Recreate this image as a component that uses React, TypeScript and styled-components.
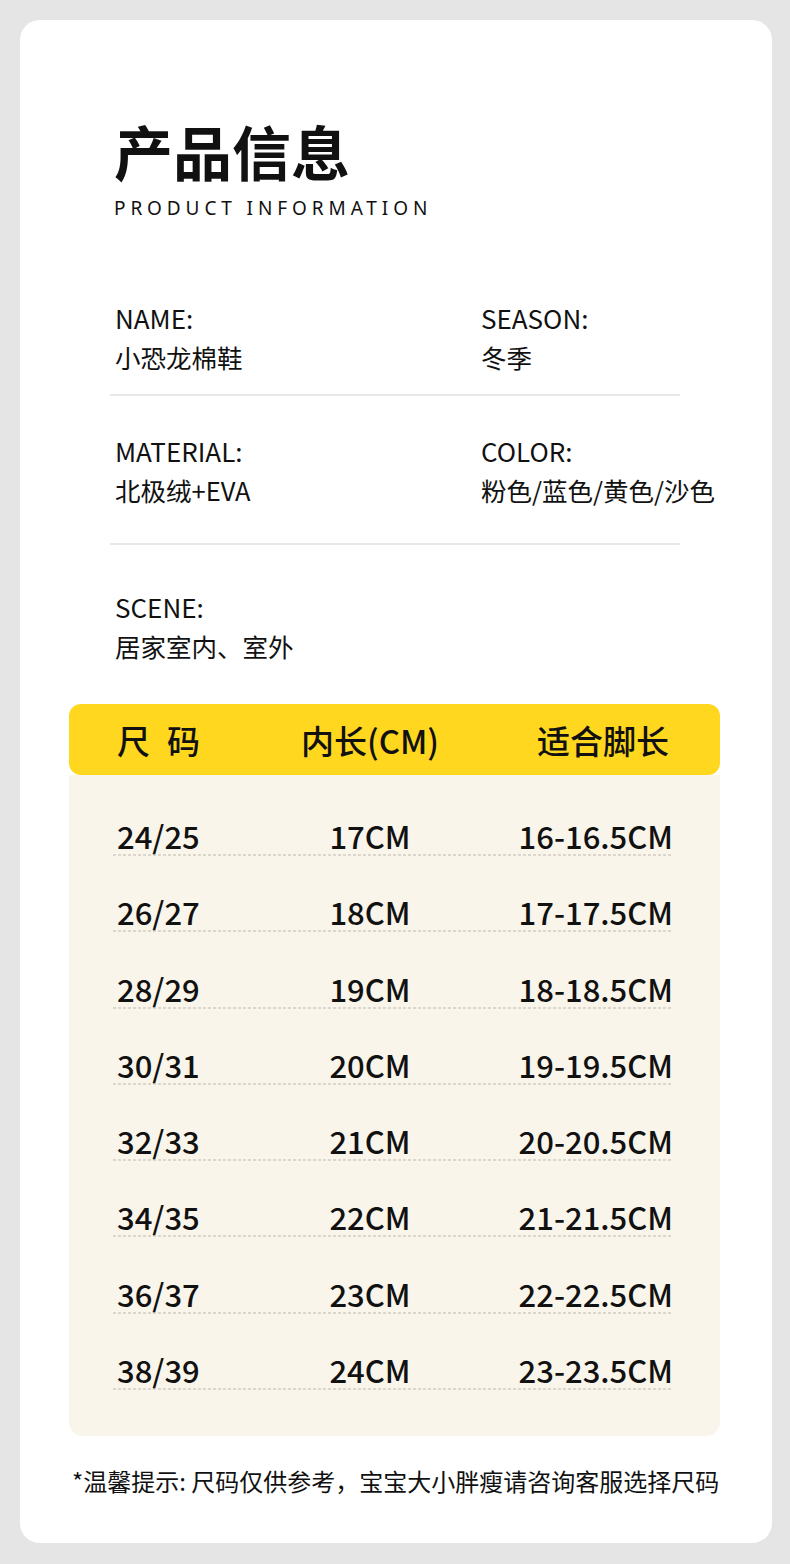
import React from "react";
import styled, { createGlobalStyle } from "styled-components";

const GlobalStyle = createGlobalStyle`
  html, body { margin: 0; padding: 0; background: #e5e5e5; }
  body { font-family: "Noto Sans CJK SC", "Noto Sans", sans-serif; color: #111; }
`;

const Page = styled.div`
  width: 790px;
  height: 1564px;
  box-sizing: border-box;
  padding: 20px 18px 21px 20px;
  background: #e5e5e5;
`;

const Card = styled.div`
  background: #fff;
  border-radius: 20px;
  height: 100%;
  box-sizing: border-box;
  padding: 96px 52px 0 49px;
  display: flex;
  flex-direction: column;
`;

const TitleBlock = styled.div`
  margin-left: 45px;
  display: flex;
  flex-direction: column;
  gap: 10px;
`;

const Title = styled.h1`
  margin: 0;
  font-size: 59px;
  line-height: 70px;
  font-weight: 700;
  color: #111;
`;

const Subtitle = styled.div`
  font-family: "Noto Sans", sans-serif;
  font-size: 19px;
  line-height: 24px;
  letter-spacing: 4.9px;
  color: #111;
`;

const Info = styled.div`
  margin: 83px 0 0 41px;
  width: 570px;
  display: flex;
  flex-direction: column;
`;

const InfoRow = styled.div<{ $pt: number; $pb: number; $line?: boolean }>`
  display: grid;
  grid-template-columns: 366px 1fr;
  padding: ${(p) => p.$pt}px 0 ${(p) => p.$pb}px 5px;
  border-bottom: ${(p) => (p.$line ? "2px solid #e8e8e8" : "none")};
`;

const Field = styled.div`
  display: flex;
  flex-direction: column;
  gap: 9px;
`;

const Label = styled.div`
  font-size: 26px;
  line-height: 30px;
  color: #111;
`;

const Value = styled.div`
  font-size: 25.5px;
  line-height: 30px;
  color: #111;
  white-space: nowrap;
`;

const Table = styled.div`
  margin-top: 43px;
  width: 651px;
  display: flex;
  flex-direction: column;
`;

const Cells = styled.div`
  display: grid;
  grid-template-columns: 151px 212px 197px;
  align-items: center;
`;

const Cell = styled.div<{ $align: "left" | "center" | "right" }>`
  text-align: ${(p) => p.$align};
  white-space: nowrap;
  padding: ${(p) => (p.$align === "left" ? "0 0 0 4px" : "0")};
`;

const HeadRow = styled(Cells)`
  height: 71px;
  box-sizing: border-box;
  padding: 0 51px 0 44px;
  background: #ffd71e;
  border-radius: 12px;
  font-size: 33px;
  font-weight: 500;
  line-height: 40px;
  grid-template-columns: 151px 212px 193px;
`;

const Body = styled.div`
  background: #f9f5eb;
  border-radius: 0 0 14px 14px;
  padding: 4.7px 47px 46px 44px;
`;

const Row = styled(Cells)`
  height: 76.3px;
  align-items: end;
  font-size: 31px;
  font-weight: 500;
  line-height: 36px;
  background: repeating-linear-gradient(to right, #dcd7cc 0 3px, transparent 3px 5px) bottom left / 100% 2px no-repeat;
  padding-bottom: 2px;
  box-sizing: border-box;
`;

const Note = styled.div`
  margin: 30px 0 0 3px;
  font-size: 24px;
  line-height: 30px;
  color: #111;
  white-space: nowrap;
`;

const Gap = styled.span`
  display: inline-block;
  width: 17px;
`;

const rows = [
  ["24/25", "17CM", "16-16.5CM"],
  ["26/27", "18CM", "17-17.5CM"],
  ["28/29", "19CM", "18-18.5CM"],
  ["30/31", "20CM", "19-19.5CM"],
  ["32/33", "21CM", "20-20.5CM"],
  ["34/35", "22CM", "21-21.5CM"],
  ["36/37", "23CM", "22-22.5CM"],
  ["38/39", "24CM", "23-23.5CM"],
];

export default function App() {
  return (
    <>
      <GlobalStyle />
      <Page>
        <Card>
          <TitleBlock>
            <Title>产品信息</Title>
            <Subtitle>PRODUCT INFORMATION</Subtitle>
          </TitleBlock>
          <Info>
            <InfoRow $pt={0} $pb={22} $line>
              <Field>
                <Label>NAME:</Label>
                <Value>小恐龙棉鞋</Value>
              </Field>
              <Field>
                <Label>SEASON:</Label>
                <Value>冬季</Value>
              </Field>
            </InfoRow>
            <InfoRow $pt={40} $pb={38} $line>
              <Field>
                <Label>MATERIAL:</Label>
                <Value>北极绒+EVA</Value>
              </Field>
              <Field>
                <Label>COLOR:</Label>
                <Value>粉色/蓝色/黄色/沙色</Value>
              </Field>
            </InfoRow>
            <InfoRow $pt={47} $pb={0}>
              <Field>
                <Label>SCENE:</Label>
                <Value>居家室内、室外</Value>
              </Field>
            </InfoRow>
          </Info>
          <Table>
            <HeadRow>
              <Cell $align="left">尺<Gap />码</Cell>
              <Cell $align="center">内长(CM)</Cell>
              <Cell $align="right">适合脚长</Cell>
            </HeadRow>
            <Body>
              {rows.map((r) => (
                <Row key={r[0]}>
                  <Cell $align="left">{r[0]}</Cell>
                  <Cell $align="center">{r[1]}</Cell>
                  <Cell $align="right">{r[2]}</Cell>
                </Row>
              ))}
            </Body>
          </Table>
          <Note>*温馨提示: 尺码仅供参考，宝宝大小胖瘦请咨询客服选择尺码</Note>
        </Card>
      </Page>
    </>
  );
}
